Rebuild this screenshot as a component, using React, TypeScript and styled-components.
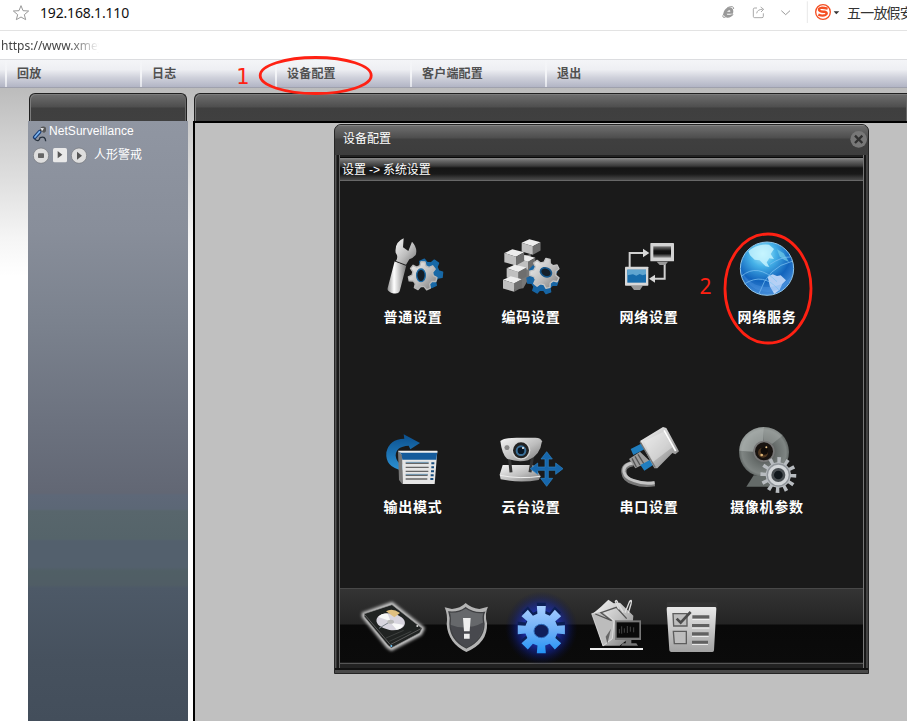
import React from "react";
import styled, { createGlobalStyle } from "styled-components";

const cjk = '"Liberation Sans", "Noto Sans CJK SC", sans-serif';

const GlobalStyle = createGlobalStyle`
  * { box-sizing: border-box; }
  body { margin: 0; background: #fff; overflow: hidden; font-family: ${cjk}; }
`;

const Page = styled.div`
  width: 907px;
  height: 721px;
  display: flex;
  flex-direction: column;
  position: relative;
  overflow: hidden;
`;

const AddressBar = styled.div`
  height: 31px;
  flex: none;
  display: flex;
  border-bottom: 1px solid #e3e3e3;
  padding-left: 12px;
  svg { display: block; flex: none; }
`;

const Address = styled.div`
  font: 14px/26px "Noto Sans", sans-serif;
  letter-spacing: -0.18px;
  color: #111;
  margin-left: 10px;
  width: 680px;
  flex: none;
  white-space: nowrap;
`;

const BarTools = styled.div`
  display: flex;
  flex: none;
`;

const SearchHint = styled.div`
  font: 14px/24px "Noto Sans CJK SC", sans-serif;
  letter-spacing: -0.8px;
  color: #333;
  white-space: nowrap;
`;

const TabStrip = styled.div`
  height: 28px;
  flex: none;
  padding-left: 1px;
`;

const TabUrl = styled.div`
  width: 110px;
  white-space: nowrap;
  font: 12px/29px "Noto Sans", sans-serif;
  color: #444;
  mask-image: linear-gradient(to right, #000 68px, transparent 98px);
`;

const NavBar = styled.nav`
  height: 29px;
  flex: none;
  display: flex;
  padding-left: 5px;
  border-top: 1px solid #dcdde0;
  border-bottom: 1px solid #9fa1ad;
  background: linear-gradient(#f4f5f8 0%, #eeeff3 35%, #ced0da 66%, #b2b5c5 100%);
`;

const NavItem = styled.div`
  width: 135px;
  padding-left: 10px;
  border-left: 2px solid;
  border-image: linear-gradient(#f4f5f8, #f3f4f7 60%, #dcdee6) 1;
  font: bold 12px/28px ${cjk};
  letter-spacing: 0.2px;
  color: #505050;
`;

const Workspace = styled.main`
  flex: 1;
  display: flex;
  padding: 5px 0 0 28px;
  background: linear-gradient(#bcbcbc 0, #d0d0d0 50px, #e0e0e0 95px, #f5f5f5 150px, #fff 188px);
`;

const Sidebar = styled.aside`
  width: 160px;
  display: flex;
  flex-direction: column;
`;

const PanelHeader = styled.div`
  height: 28px;
  flex: none;
  border: 1px solid #202020;
  border-bottom: 0;
  border-radius: 6px 6px 0 0;
  margin: 0 1px;
  box-shadow: inset 1px 1px 0 #7c7c7c, inset -1px 0 0 #686868;
  background: linear-gradient(#6e6e6e 0, #4e4e4e 13px, #3f3f3f 14px, #404040 100%);
`;

const DeviceTree = styled.div`
  flex: 1;
  background: linear-gradient(
    #9096a2 0, #888e9a 110px, #7b828e 200px, #6c727f 300px, #626774 372px,
    #5e6878 374px, #5c6776 388px, #58666c 390px, #55646a 418px, #53606d 420px,
    #53606d 446px, #505f65 450px, #505d65 464px, #4d5967 467px, #46515e 540px, #434e5b 600px
  );
`;

const DeviceRow = styled.div`
  display: flex;
  height: 24px;
  padding-left: 4px;
  color: #fff;
  font: 12px/20px ${cjk};
  letter-spacing: 0.05px;
`;

const ChannelRow = styled(DeviceRow)`
  padding-left: 5px;
  line-height: 21px;
  letter-spacing: 0;
`;

const ChannelName = styled.span`
  margin-left: 4px;
`;

const Stage = styled.section`
  flex: 1;
  margin-left: 5px;
  display: flex;
  flex-direction: column;
`;

const StageHeader = styled(PanelHeader)`
  border-radius: 6px 0 0 0;
  border-right: 0;
  margin-right: 0;
`;

const Canvas = styled.div`
  flex: 1;
  border: solid #000;
  border-width: 2px 0 0 2px;
  background: #c0c0c0;
  padding: 1px 0 0 139px;
`;

const Dialog = styled.div`
  width: 535px;
  height: 550px;
  display: flex;
  flex-direction: column;
  border: 1px solid #252525;
  border-radius: 7px 7px 0 0;
  background: #3e3e3e;
  overflow: hidden;
`;

const TitleBar = styled.header`
  height: 30px;
  flex: none;
  display: flex;
  justify-content: space-between;
  padding: 0 1px 0 8px;
  color: #fff;
  font: 12px/28px ${cjk};
  box-shadow: inset 0 1px 0 #858585;
  background: linear-gradient(#707070 0, #4d4d4d 13px, #3f3f3f 14px, #3d3d3d 100%);
`;

const DialogFrame = styled.div`
  flex: 1;
  display: flex;
  flex-direction: column;
  padding: 2px 5px 8px 5px;
  background:
    linear-gradient(#4a4a4a, #4a4a4a) 0 100% / 100% 3px no-repeat,
    linear-gradient(#111, #111) 0 calc(100% - 3px) / 100% 2px no-repeat,
    linear-gradient(to right, #555 0 1px, #333 1px 2px, #181818 2px 4px, #616161 4px 5px,
      #222 5px 528px, #777 528px 529px, #181818 529px 531px, #444 531px);
`;

const Breadcrumb = styled.div`
  height: 24px;
  flex: none;
  padding-left: 2px;
  border-top: 1px solid #080808;
  border-bottom: 1px solid #686868;
  color: #fff;
  font: 12px/25px ${cjk};
  letter-spacing: -0.1px;
  background: linear-gradient(#888 0, #666 3px, #393939 8px, #151515 10px, #191919 16px, #333 19px, #4a4a4a 100%);
`;

const SettingsGrid = styled.div`
  height: 407px;
  flex: none;
  display: grid;
  grid-template-columns: repeat(4, 118px);
  grid-auto-rows: 190px;
  padding: 54px 0 0 14px;
  background: #1a1a1a;
`;

const SettingTile = styled.div`
  display: flex;
  flex-direction: column;
  align-items: center;
  svg { width: 64px; height: 70px; display: block; }
`;

const TileLabel = styled.span`
  color: #fff;
  font: bold 14px/20px "Noto Sans CJK SC", sans-serif;
  letter-spacing: 0.75px;
  margin-top: 1px;
  white-space: nowrap;
`;

const Dock = styled.footer`
  height: 76px;
  flex: none;
  display: flex;
  padding-left: 14px;
  border-top: 1px solid #484848;
  border-bottom: 1px solid #555;
  background: linear-gradient(#343434 0, #242424 35px, #090909 36px, #0b0b0b 73px, #303030 74px);
  svg { width: 75px; height: 76px; flex: none; margin-top: -1px; display: block; }
`;

const Annotations = styled.svg`
  position: absolute;
  inset: 0;
  width: 907px;
  height: 721px;
  pointer-events: none;
`;

function gearPath(cx: number, cy: number, outer: number, inner: number, teeth: number, turn = 0, top = 0.2, base = 0.3) {
  const step = (Math.PI * 2) / teeth;
  const points: string[] = [];
  for (let i = 0; i < teeth; i++) {
    const a = i * step + turn;
    const corners: [number, number][] = [[-base, inner], [-top, outer], [top, outer], [base, inner]];
    corners.forEach(([k, r]) => {
      points.push(`${(cx + r * Math.cos(a + k * step)).toFixed(1)} ${(cy + r * Math.sin(a + k * step)).toFixed(1)}`);
    });
  }
  return `M${points.join("L")}Z`;
}

const ring = (cx: number, cy: number, rx: number, ry: number) =>
  `M${cx - rx} ${cy}a${rx} ${ry} 0 1 0 ${rx * 2} 0a${rx} ${ry} 0 1 0 ${-rx * 2} 0Z`;

const Gradients = () => (
  <defs>
    <linearGradient id="metal" x1="0" y1="0" x2="1" y2="1">
      <stop offset="0" stopColor="#f6f6f6" /><stop offset=".55" stopColor="#bdbdbd" /><stop offset="1" stopColor="#777" />
    </linearGradient>
    <linearGradient id="paper" x1="0" y1="0" x2="0" y2="1">
      <stop offset="0" stopColor="#e9e9e9" /><stop offset="1" stopColor="#a2a2a2" />
    </linearGradient>
    <linearGradient id="handle">
      <stop offset="0" stopColor="#8c8c8c" /><stop offset=".35" stopColor="#fff" /><stop offset="1" stopColor="#777" />
    </linearGradient>
    <linearGradient id="blue" x1="0" y1="0" x2="0" y2="1">
      <stop offset="0" stopColor="#0b4f8d" /><stop offset="1" stopColor="#2c92d4" />
    </linearGradient>
    <radialGradient id="globe" cx=".42" cy=".22" r=".8">
      <stop offset="0" stopColor="#b9f4ff" /><stop offset=".3" stopColor="#46b2e8" /><stop offset=".65" stopColor="#1264bd" /><stop offset="1" stopColor="#4a91dc" />
    </radialGradient>
    <radialGradient id="dome" cx=".5" cy=".5" r=".55">
      <stop offset="0" stopColor="#444" /><stop offset=".5" stopColor="#6a706e" /><stop offset=".8" stopColor="#7f8583" /><stop offset="1" stopColor="#4b504e" />
    </radialGradient>
    <linearGradient id="screen" x1="0" y1="0" x2="0" y2="1">
      <stop offset="0" stopColor="#777" /><stop offset=".4" stopColor="#111" /><stop offset=".65" stopColor="#111" /><stop offset="1" stopColor="#999" />
    </linearGradient>
    <linearGradient id="cog" x1="0" y1="0" x2="0" y2="1">
      <stop offset="0" stopColor="#a8ceff" /><stop offset=".5" stopColor="#70b0f7" /><stop offset="1" stopColor="#2293f5" />
    </linearGradient>
    <radialGradient id="halo">
      <stop offset=".4" stopColor="#2038c8" stopOpacity=".9" /><stop offset=".7" stopColor="#12249a" stopOpacity=".5" /><stop offset="1" stopColor="#080d40" stopOpacity="0" />
    </radialGradient>
    <filter id="soft" x="-20%" y="-20%" width="140%" height="140%"><feGaussianBlur stdDeviation="4" /></filter>
  </defs>
);

const WrenchIcon = () => (
  <svg viewBox="33 30 192 210">
    <path d={gearPath(174, 145, 44, 33, 6, 0.1, 0.17, 0.32) + ring(166, 148, 11, 18)} fillRule="evenodd" fill="#1768a6" stroke="#1768a6" strokeWidth="4" strokeLinejoin="round" />
    <path d={gearPath(158, 153, 43, 32, 7, 0.25, 0.16, 0.32) + ring(153, 151, 13, 19)} fillRule="evenodd" fill="url(#metal)" stroke="#b9b9b9" strokeWidth="4" strokeLinejoin="round" />
    <ellipse cx="153" cy="151" rx="13" ry="19" fill="#151e26" stroke="#1b6ba8" strokeWidth="4" />
    <path d="M74 109L109 121L89 199Q84 210 63 203Q50 197 53 189Z" fill="url(#handle)" />
    <path d="M74 107L110 121" stroke="#222" strokeWidth="4" />
    <path d="M78 108Q86 95 77 83Q73 52 101 40L99 67L115 78L126 50Q144 69 137 90Q127 101 118 103L108 119Z" fill="url(#metal)" />
  </svg>
);

const Cube = ({ x, y, s }: { x: number; y: number; s: number }) => (
  <g transform={`translate(${x} ${y}) scale(${s})`}>
    <path d="M0 10L22 0L54 8L32 20Z" fill="#ededed" />
    <path d="M0 10L32 20V44L0 35Z" fill="#c0c0c0" />
    <path d="M32 20L54 8V32L32 44Z" fill="#6e6e6e" />
  </g>
);

const EncodeIcon = () => (
  <svg viewBox="27 30 192 210">
    <path d="M70 106L122 86V150L100 190L64 194Z" fill="#777" />
    <Cube x={82} y={90} s={1} />
    <Cube x={95} y={43} s={1.05} />
    <Cube x={43} y={73} s={1.1} />
    <Cube x={50} y={119} s={1.1} />
    <Cube x={39} y={154} s={1.05} />
    <path d={gearPath(158, 160, 47, 36, 7, 0.3, 0.18, 0.32)} fill="#1765a4" stroke="#1765a4" strokeWidth="4" strokeLinejoin="round" />
    <path d={gearPath(164, 145, 45, 34, 7, 0.45, 0.16, 0.32)} fill="url(#metal)" stroke="#c4c4c4" strokeWidth="4" strokeLinejoin="round" />
    <ellipse cx="168" cy="142" rx="17" ry="13" transform="rotate(25 168 142)" fill="#15202b" stroke="#17588c" strokeWidth="5" />
  </svg>
);

const NetworkIcon = () => (
  <svg viewBox="36 30 192 210">
    <path d="M74 128V84H120M179 116V161H143" fill="none" stroke="#d0d0d0" strokeWidth="6" />
    <path d="M114 71L133 84L114 97ZM150 149L132 161L150 173Z" fill="#d8d8d8" />
    <rect x="136" y="54" width="71" height="55" rx="2" fill="#d3d3d3" />
    <rect x="145" y="64" width="53" height="34" fill="url(#screen)" />
    <path d="M155 110H189L181 120H164Z" fill="#999" />
    <rect x="60" y="125" width="70" height="57" rx="2" fill="#d8d8d8" />
    <rect x="67" y="134" width="56" height="39" fill="#176cab" />
    <path d="M67 134H123V148L113 151L104 147L94 152L84 148L67 151Z" fill="#5fa5d0" />
    <path d="M78 183H113L105 195H87Z" fill="#999" />
  </svg>
);

const GlobeIcon = () => (
  <svg viewBox="105 30 192 210">
    <circle cx="201" cy="131" r="80" fill="url(#globe)" stroke="#91c7eb" strokeWidth="3" />
    <path d="M145 79Q172 55 207 59L222 72L212 87L222 102L208 100L200 112L208 126L197 124L179 106L164 104L150 91Z" fill="#c9f5ff" opacity=".8" />
    <path d="M203 155L218 148L231 153L242 151L258 166L247 177L239 194L223 207L210 185Z" fill="#c5dafa" opacity=".9" />
    <path d="M231 73L251 85L267 111L252 104L239 94Z" fill="#73cde9" opacity=".7" />
    <path d="M124 154Q172 112 231 170M133 177Q190 140 238 196M177 206Q204 125 276 109M210 118Q245 95 270 96" fill="none" stroke="#80c4f4" strokeWidth="3" opacity=".7" />
    <path d="M123 126A80 80 0 0 0 278 148A82 68 0 0 1 123 126" fill="#64a8f0" opacity=".25" />
  </svg>
);

const OutputIcon = () => (
  <svg viewBox="33 30 192 210">
    <path d="M97 166Q45 158 49 112Q58 72 103 71L101 58L150 84L121 103L116 92Q77 94 77 122Q79 145 101 149Z" fill="url(#blue)" />
    <path d="M84 108L97 119V208L87 195Z" fill="#777" />
    <path d="M84 108H202L194 207H98L96 120Z" fill="#e5e5e5" />
    <path d="M86 109H202L199 134H97L95 119Z" fill="#155b9b" />
    <path d="M84 107H202V113H92Z" fill="#eee" />
    <path d="M107 145H176M107 157H176M107 169H175M107 181H173M107 192H172" stroke="#666" strokeWidth="4" />
    <path d="M107 142H176M107 178H174" stroke="#3874a0" strokeWidth="2" />
    <path d="M184 145H193M184 157H192M183 169H192M182 181H191M181 192H190" stroke="#174c7d" strokeWidth="6" />
  </svg>
);

const PtzIcon = () => (
  <svg viewBox="387 30 192 210">
    <path d="M398 150H489L512 184L506 195Q450 205 392 193L389 179Z" fill="url(#metal)" />
    <path d="M390 181Q450 193 511 184" fill="none" stroke="#eee" strokeWidth="3" />
    <path d="M418 125L423 172M488 122L480 172" stroke="#333" strokeWidth="9" />
    <path d="M391 78Q402 69 440 68H496Q514 69 516 79Q510 123 474 136Q442 143 411 131Q396 119 391 78Z" fill="url(#metal)" />
    <circle cx="411" cy="98" r="9" fill="#888" stroke="#eee" strokeWidth="2" />
    <circle cx="453" cy="106" r="28" fill="#d5d5d5" />
    <circle cx="453" cy="106" r="24" fill="#222" />
    <circle cx="453" cy="107" r="16" fill="#3b7099" />
    <circle cx="453" cy="107" r="10" fill="#071422" />
    <circle cx="459" cy="99" r="3" fill="#fff" />
    <path d="M530 110L547 132H535V156H557V144L579 161L557 178V166H535V190H548L530 214L512 190H525V166H503V178L481 161L503 144V156H525V132H513Z" fill="#1767ac" stroke="#2d87c8" strokeWidth="2" />
  </svg>
);

const SerialIcon = () => (
  <svg viewBox="36 30 192 210">
    <path d="M84 146Q53 151 57 173Q59 193 85 201Q114 212 149 206" fill="none" stroke="#777" strokeWidth="16" />
    <path d="M84 144Q53 149 57 171Q61 190 87 197Q116 208 149 203" fill="none" stroke="#c4c4c4" strokeWidth="9" />
    <path d="M72 132L105 110L135 139L91 160Z" fill="#9c9c9c" />
    <path d="M81 130L94 156M90 124L105 150M99 118L117 147" stroke="#555" strokeWidth="4" />
    <path d="M77 102L108 86L120 102L85 120Z M106 150L139 133L149 147L118 167Z" fill="#207ebf" />
    <path d="M105 78L174 36L184 39L222 109L211 118L202 114L157 160H148Z" fill="url(#metal)" />
    <path d="M117 79L176 50L202 97L143 142Z" fill="#eee" opacity=".45" />
    <path d="M177 46L212 108" stroke="#fff" strokeWidth="5" />
    <path d="M105 80L151 158" stroke="#777" strokeWidth="4" />
  </svg>
);

const CameraIcon = () => (
  <svg viewBox="390 30 192 210">
    <path d="M446 181L424 215H510L522 183Z" fill="#656b69" />
    <circle cx="477" cy="111" r="75" fill="url(#dome)" />
    <path d="M421 61A75 75 0 0 1 477 36L475 79Q447 81 445 110L403 107Q403 80 421 61Z" fill="#c4c9c7" opacity=".5" />
    <path d="M477 36A75 75 0 0 1 532 62L501 87Q492 79 477 79Z" fill="#b4b9b7" opacity=".4" />
    <circle cx="477" cy="109" r="32" fill="#777" />
    <circle cx="477" cy="109" r="27" fill="#181310" />
    <circle cx="474" cy="113" r="15" fill="#4f3720" />
    <circle cx="478" cy="108" r="11" fill="#100c09" />
    <circle cx="470" cy="120" r="4" fill="#e0b878" /><circle cx="484" cy="97" r="3" fill="#eac58b" />
    <path d={gearPath(520, 180, 54, 38, 12, 0.05, 0.2, 0.24)} fill="#b8bcc0" />
    <circle cx="520" cy="180" r="33" fill="#d2d5d8" stroke="#90959a" strokeWidth="4" />
    <circle cx="520" cy="180" r="21" fill="#494e52" /><circle cx="520" cy="180" r="13" fill="#11171c" />
  </svg>
);

const DiskIcon = () => (
  <svg viewBox="72 24 225 228">
    <path d="M98 100L186 68L282 145L273 163L184 210L172 202L98 110Z" fill="#ccc" stroke="#ccc" strokeWidth="5" filter="url(#soft)" />
    <path d="M103 101L186 74L276 145L269 159L184 204L174 196L103 110Z" fill="#202322" stroke="#8c8c8c" strokeWidth="2" />
    <path d="M105 105L181 194L275 145" fill="none" stroke="#5a5a5a" strokeWidth="3" />
    <ellipse cx="182" cy="125" rx="43" ry="25" transform="rotate(8 182 125)" fill="#d8d5df" />
    <path d="M168 94Q186 82 210 99L193 112Z" fill="#dfbf80" />
    <path d="M182 124L145 111Q155 99 173 101ZM182 128L220 134Q214 148 200 149Z" fill="#f8f8f8" />
    <path d="M182 124L147 145" stroke="#79828a" strokeWidth="3" />
    <ellipse cx="182" cy="125" rx="10" ry="6" fill="#b8b8b8" />
    <path d="M168 174L221 151M178 184L244 154" stroke="#4d504e" strokeWidth="2" />
    <circle cx="184" cy="198" r="3" fill="#6fc7ff" /><circle cx="262" cy="138" r="3" fill="#ddd" />
  </svg>
);

const ShieldIcon = () => (
  <svg viewBox="297 24 225 228">
    <path d="M344 82L366 87Q391 85 407 69Q423 84 448 87L474 80Q463 101 471 130Q474 189 409 216Q354 190 350 132Q354 105 344 82Z" fill="#b4b4b4" />
    <path d="M357 96Q386 99 407 83Q430 101 463 97Q457 108 462 132Q461 179 409 204Q361 180 360 132Q363 112 357 96Z" fill="#66686b" stroke="#3f4043" strokeWidth="4" />
    <path d="M361 134Q409 154 461 127Q457 181 409 202Q363 179 361 134Z" fill="#33363a" opacity=".6" />
    <path d="M399 114H422L419 154H402Z M402 161H419V176H402Z" fill="#eee" />
  </svg>
);

const CogIcon = () => (
  <svg viewBox="522 24 225 228">
    <ellipse cx="634" cy="145" rx="109" ry="111" fill="url(#halo)" />
    <path d={gearPath(634, 139, 72, 48, 8, 0, 0.24, 0.31)} fill="#0c1f55" />
    <path d={gearPath(634, 149, 72, 49, 8, 0, 0.24, 0.31)} fill="url(#cog)" />
    <ellipse cx="634" cy="153" rx="22" ry="20" fill="#101e5a" stroke="#2c68b8" strokeWidth="3" />
  </svg>
);

const SystemIcon = () => (
  <svg viewBox="57 24 225 228">
    <path d="M98 101L123 80L145 59L161 70L180 68L220 107L215 168L179 197H128Z" fill="url(#metal)" />
    <path d="M95 101L126 93L162 122L157 176L129 198Z" fill="#bcbcbc" stroke="#eee" strokeWidth="2" />
    <path d="M106 102L155 122L123 98L169 82L200 116" fill="none" stroke="#555" strokeWidth="4" />
    <path d="M137 170L153 146L142 191Z" fill="#666" />
    <path d="M176 88L166 64Q170 57 174 70L190 97M195 98L208 66Q217 54 213 72L205 99" fill="none" stroke="#ddd" strokeWidth="4" />
    <rect x="165" y="121" width="78" height="59" fill="#777" />
    <rect x="170" y="127" width="68" height="46" fill="#090909" />
    <path d="M178 160V147M185 161V139M193 158V145M202 159V138M211 155V140M221 157V142" stroke="#444" strokeWidth="3" />
    <path d="M197 180H214V190H229L234 197H183L188 190H197Z" fill="#777" />
    <path d="M90 207H249" stroke="#eee" strokeWidth="6" />
  </svg>
);

const ChecklistIcon = () => (
  <svg viewBox="282 24 225 228">
    <path d="M320 67H472V83H320Z" fill="#333" />
    <path d="M323 81H466Q469 81 469 86L462 211Q462 216 457 216H334Q329 216 328 211L320 87Q320 81 323 81Z" fill="url(#paper)" />
    <path d="M339 101H381V138H341ZM340 154H379V191H343Z" fill="#bdbdbd" stroke="#5d5d5d" strokeWidth="4" />
    <path d="M350 116L362 128L392 96" fill="none" stroke="#4b4b4b" strokeWidth="8" />
    <path d="M397 111H448M396 137H448M396 162H446M396 187H444" stroke="#606060" strokeWidth="10" />
    <path d="M397 118H448M396 144H448M396 169H446M396 193H444" stroke="#f5f5f5" strokeWidth="3" />
  </svg>
);

const DeviceIcon = () => (
  <svg width="17" height="24" viewBox="96 363 51 72">
    <path d="M104 418Q117 428 120 413Q137 407 137 424" fill="none" stroke="#27313d" strokeWidth="4" />
    <path d="M104 412L119 395" stroke="#153872" strokeWidth="11" strokeLinecap="round" />
    <path d="M105 411L119 395" stroke="#7cb4ee" strokeWidth="5" strokeLinecap="round" />
    <path d="M121 392L130 385" stroke="#333" strokeWidth="6" />
    <path d="M122 382Q131 377 138 383V394L132 399L124 393Z" fill="#575757" />
    <path d="M122 384L132 385L126 394Z" fill="#eee" />
  </svg>
);

const ChannelIcons = () => (
  <svg width="57" height="22" viewBox="99 435 171 66">
    <circle cx="123" cy="467" r="23" fill="#dedede" stroke="#6f7378" strokeWidth="2" />
    <rect x="114" y="460" width="18" height="14" rx="2" fill="#666" />
    <rect x="159" y="444" width="42" height="43" rx="5" fill="#e9e9e9" />
    <path d="M173 453L187 464L173 475Z" fill="#555" />
    <circle cx="237" cy="467" r="23" fill="#dedede" stroke="#6f7378" strokeWidth="2" />
    <path d="M231 455L246 467L231 479Z" fill="#555" />
  </svg>
);

const StarIcon = () => (
  <svg width="18" height="26" viewBox="36 0 54 78">
    <path d="M63 17L69 32L86 33L73 44L77 59L63 51L49 59L53 44L40 33L57 32Z" fill="none" stroke="#999" strokeWidth="3" />
  </svg>
);

const BrowserIcons = () => (
  <svg width="127" height="30" viewBox="240 0 381 90">
    <path d="M279 41H260Q261 47 275 43H281Q273 54 261 53Q248 49 251 36Q256 22 270 22Q283 25 279 41ZM261 35H271Q271 27 261 35Z" fill="#999" fillRule="evenodd" />
    <path d="M281 27Q282 15 262 23M252 40Q243 56 257 51" fill="none" stroke="#999" strokeWidth="3" />
    <path d="M351 24H344Q340 24 340 28V49Q340 53 344 53H366Q370 53 370 49V40M350 40Q352 28 368 28M362 21L371 28L363 36" fill="none" stroke="#999" strokeWidth="2.5" />
    <path d="M424 32L437 44L450 32" fill="none" stroke="#999" strokeWidth="3" />
    <path d="M502 4V69" stroke="#ddd" strokeWidth="2" />
    <circle cx="549" cy="36" r="22" fill="#fff" stroke="#f55023" strokeWidth="4" />
    <path d="M563 26Q536 19 537 30Q540 36 554 35Q566 39 556 45Q548 49 535 44" fill="none" stroke="#f55023" strokeWidth="7" />
    <path d="M581 34H598L589 43Z" fill="#333" />
  </svg>
);

const CloseIcon = () => (
  <svg width="17" height="28" viewBox="630 375 51 84">
    <circle cx="656" cy="418" r="25" fill="#777" />
    <path d="M645 407L667 429M667 407L645 429" stroke="#303030" strokeWidth="7" />
  </svg>
);

const navItems = ["回放", "日志", "设备配置", "客户端配置", "退出"];

const tiles = [
  { label: "普通设置", Icon: WrenchIcon },
  { label: "编码设置", Icon: EncodeIcon },
  { label: "网络设置", Icon: NetworkIcon },
  { label: "网络服务", Icon: GlobeIcon },
  { label: "输出模式", Icon: OutputIcon },
  { label: "云台设置", Icon: PtzIcon },
  { label: "串口设置", Icon: SerialIcon },
  { label: "摄像机参数", Icon: CameraIcon },
];

export default function App() {
  return (
    <Page>
      <GlobalStyle />
      <AddressBar>
        <StarIcon />
        <Address>192.168.1.110</Address>
        <BarTools>
          <BrowserIcons />
          <SearchHint>五一放假安</SearchHint>
        </BarTools>
      </AddressBar>
      <TabStrip>
        <TabUrl>https://www.xmey</TabUrl>
      </TabStrip>
      <NavBar>
        {navItems.map((item) => <NavItem key={item}>{item}</NavItem>)}
      </NavBar>
      <Workspace>
        <Sidebar>
          <PanelHeader />
          <DeviceTree>
            <DeviceRow><DeviceIcon />NetSurveillance</DeviceRow>
            <ChannelRow><ChannelIcons /><ChannelName>人形警戒</ChannelName></ChannelRow>
          </DeviceTree>
        </Sidebar>
        <Stage>
          <StageHeader />
          <Canvas>
            <Dialog>
              <TitleBar>设备配置<CloseIcon /></TitleBar>
              <DialogFrame>
                <Breadcrumb>设置 -&gt; 系统设置</Breadcrumb>
                <SettingsGrid>
                  {tiles.map(({ label, Icon }) => (
                    <SettingTile key={label}><Icon /><TileLabel>{label}</TileLabel></SettingTile>
                  ))}
                </SettingsGrid>
                <Dock>
                  <DiskIcon /><ShieldIcon /><CogIcon /><SystemIcon /><ChecklistIcon />
                </Dock>
              </DialogFrame>
            </Dialog>
          </Canvas>
        </Stage>
      </Workspace>
      <Annotations>
        <Gradients />
        <g fill="none" stroke="#ff2113" strokeWidth="2.8">
          <ellipse cx="315.7" cy="75.5" rx="55.5" ry="18" />
          <ellipse cx="768" cy="288.5" rx="43" ry="54.5" />
        </g>
        <g fill="#ff2113" fontFamily="DejaVu Sans, sans-serif" fontSize="21">
          <text x="236.3" y="84">1</text>
          <text x="699.5" y="294" fontFamily="Noto Sans, sans-serif">2</text>
        </g>
      </Annotations>
    </Page>
  );
}
